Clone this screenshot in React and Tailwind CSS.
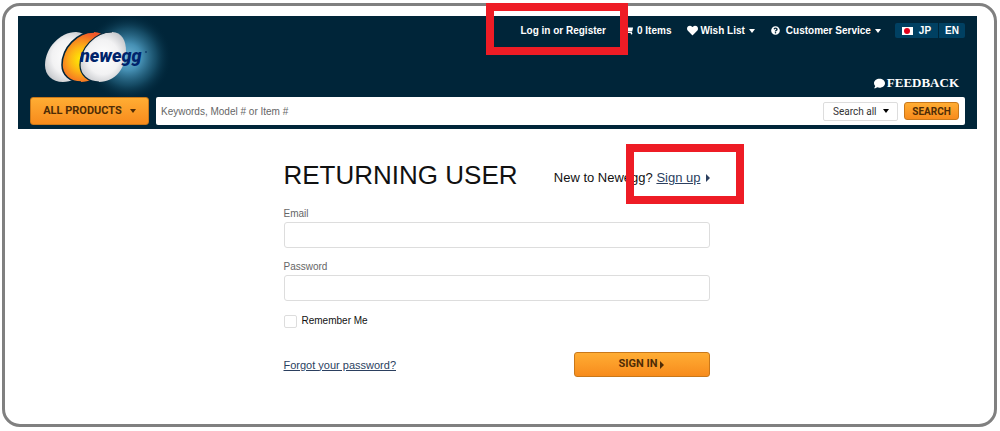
import React from "react";
import { FaHeart, FaQuestionCircle, FaComment, FaShoppingCart } from "react-icons/fa";

function CaretDown({ className }) {
  return (
    <svg viewBox="0 0 6 4" aria-hidden="true" className={`h-1 w-1.5 shrink-0 fill-current ${className || ""}`}>
      <path d="M0 0h6L3 4z" />
    </svg>
  );
}

function CaretRight() {
  return (
    <svg viewBox="0 0 4 8" aria-hidden="true" className="h-2 w-1 shrink-0 fill-current">
      <path d="M0 0l4 4-4 4z" />
    </svg>
  );
}

function Logo() {
  return (
    <a href="#home" aria-label="newegg" className="block shrink-0">
      <svg viewBox="18 16 165 81" className="block h-[81px] w-[165px]">
        <defs>
          <radialGradient id="glow">
            <stop offset="0" stopColor="#6fb6d8" />
            <stop offset="0.3" stopColor="#4690b4" />
            <stop offset="0.65" stopColor="#1a536e" stopOpacity="0.8" />
            <stop offset="1" stopColor="#002539" stopOpacity="0" />
          </radialGradient>
          <radialGradient id="shell" cx="0.5" cy="0.5" r="0.58">
            <stop offset="0" stopColor="#ffffff" />
            <stop offset="0.6" stopColor="#f2f2f3" />
            <stop offset="1" stopColor="#c4c6ca" />
          </radialGradient>
          <radialGradient id="yolk" cx="0.42" cy="0.55" r="0.55">
            <stop offset="0" stopColor="#fff200" />
            <stop offset="0.45" stopColor="#fdb515" />
            <stop offset="1" stopColor="#f1592a" />
          </radialGradient>
        </defs>
        <circle cx="128" cy="57" r="44" fill="url(#glow)" />
        <path d="M45 65C45 48 60 32 76 32C86 32 91 41 91 51C91 68 79 82 63 82C52 82 45 75 45 65Z" fill="url(#shell)" />
        <path d="M62 65C62 48 77 32 94 32C104 32 109 41 109 51C109 68 97 82 81 82C70 82 62 75 62 65Z" fill="url(#yolk)" />
        <path d="M81 82C70 82 62 75 62 65C62 48 77 32 94 32" fill="none" stroke="#002539" strokeWidth="1.5" />
        <path d="M80 65C80 48 95 32 112 32C122 32 126 41 126 51C126 68 115 82 99 82C88 82 80 75 80 65Z" fill="url(#shell)" />
        <path d="M99 82C88 82 80 75 80 65C80 48 95 32 112 32" fill="none" stroke="#002539" strokeWidth="1.2" />
        <text x="80" y="62" fontSize="18" fontWeight="900" fontStyle="italic" fill="#00246b" className="font-['Roboto',sans-serif]">
          newegg
        </text>
        <circle cx="146" cy="52" r="1" fill="#12406f" />
      </svg>
    </a>
  );
}

const orange =
  "flex items-center justify-center rounded-[3px] border border-[#c9781a] bg-linear-to-b from-[#ffad33] to-[#f78b1c] font-['Roboto',sans-serif] font-bold text-[#4f2c06]";

function Header() {
  return (
    <header className="bg-[#002539] pr-3 text-[10px] font-bold text-white">
      <div className="flex justify-between">
        <Logo />
        <div className="flex flex-col items-end justify-between pt-[7px] pb-1.5">
          <nav className="flex items-center">
            <a href="#login" className="relative mr-[18px]">
              Log in or Register
              <span className="pointer-events-none absolute -top-5 -right-[22px] -left-[34px] h-[52px] border-8 border-[#ee1c25]" />
            </a>
            <a href="#cart" className="mr-4 flex items-center gap-1">
              <FaShoppingCart className="size-[9px]" />0 Items
            </a>
            <a href="#wishes" className="mr-4 flex items-center gap-0.5">
              <FaHeart className="size-[11px]" />
              Wish List
              <CaretDown className="ml-0.5" />
            </a>
            <a href="#service" className="mr-3.5 flex items-center gap-1">
              <FaQuestionCircle className="mr-0.5 size-[9px]" />
              Customer Service
              <CaretDown />
            </a>
            <div className="flex h-[15px] items-center rounded-[2px] bg-[#004062]">
              <a href="#jp" className="flex h-full items-center gap-1.5 border-r border-[#002539] px-[7px]">
                <span className="flex h-2 w-[11px] items-center justify-center bg-white">
                  <span className="size-1.5 rounded-full bg-[#e3001b]" />
                </span>
                JP
              </a>
              <a href="#en" className="px-1.5">EN</a>
            </div>
          </nav>
          <a href="#feedback" className="mr-1.5 flex items-center gap-0.5 font-['Liberation_Serif',serif] text-[13px] leading-4">
            <FaComment className="size-[11px]" />
            FEEDBACK
          </a>
        </div>
      </div>
      <div className="flex h-8 gap-[7px] pb-1 pl-3">
        <button type="button" className={`${orange} w-[119px] shrink-0 gap-2 text-[11px]`}>
          ALL PRODUCTS
          <CaretDown />
        </button>
        <form className="flex min-w-0 flex-1 items-center gap-1.5 rounded-[2px] bg-white pr-1.5 pl-[5px]" onSubmit={(e) => e.preventDefault()}>
          <input
            type="search"
            aria-label="Search products"
            placeholder="Keywords, Model # or Item #"
            className="min-w-0 flex-1 font-normal text-black outline-none placeholder:text-[#666]"
          />
          <div className="relative text-black">
            <select aria-label="Category" className="h-[19px] w-[75px] appearance-none rounded-[2px] border border-[#ddd] bg-white pl-[9px] font-['Roboto',sans-serif] font-normal text-[#333]">
              <option>Search all</option>
            </select>
            <CaretDown className="pointer-events-none absolute top-[7px] right-[9px]" />
          </div>
          <button type="submit" className={`${orange} h-[18px] w-[55px] text-[10px]`}>SEARCH</button>
        </form>
      </div>
    </header>
  );
}

function Field({ id, label, type }) {
  return (
    <div>
      <label htmlFor={id} className="block text-[10px] leading-4 text-[#666]">{label}</label>
      <input id={id} type={type} className="block h-[26px] w-full rounded-[3px] border border-[#ddd] px-2 text-xs outline-none" />
    </div>
  );
}

function SignIn() {
  return (
    <main className="mx-auto mt-[30px] w-full max-w-[428px] pr-0.5">
      <div className="flex items-center justify-between">
        <h1 className="text-[26px] leading-8 text-[#111]">RETURNING USER</h1>
        <p className="flex items-center pt-1.5 text-[13px] leading-4 text-[#111]">
          New to Newegg?&nbsp;
          <a href="#signup" className="relative flex items-center gap-[5px] text-[#2b3f5f]">
            <span className="underline">Sign up</span>
            <CaretRight />
            <span className="pointer-events-none absolute -top-[26px] -right-[34px] -left-[30px] h-[60px] border-8 border-[#ee1c25]" />
          </a>
        </p>
      </div>
      <form className="mt-[15px] flex flex-col gap-[11px]" onSubmit={(e) => e.preventDefault()}>
        <Field id="email" label="Email" type="email" />
        <Field id="password" label="Password" type="password" />
        <label className="mt-px flex items-center gap-[5px] self-start text-[10px] leading-4 text-[#111]">
          <input type="checkbox" className="size-[13px] appearance-none rounded-[2px] border border-[#ddd] checked:bg-[#f78b1c]" />
          Remember Me
        </label>
        <div className="mt-3 flex items-center justify-between">
          <a href="#forgot" className="text-[11px] leading-4 text-[#2b3f5f] underline">Forgot your password?</a>
          <button type="submit" className={`${orange} h-[25px] w-[136px] gap-[3px] text-[11px]`}>
            SIGN IN
            <CaretRight />
          </button>
        </div>
      </form>
    </main>
  );
}

export default function App() {
  return (
    <div className="bg-white py-[3px] pr-[3px] pl-[2px] font-['Liberation_Sans',Arial,sans-serif]">
      <div className="rounded-[18px] border-[3px] border-[#808080] pt-2.5 pr-[17px] pb-[47px] pl-[13px]">
        <Header />
        <SignIn />
      </div>
    </div>
  );
}
